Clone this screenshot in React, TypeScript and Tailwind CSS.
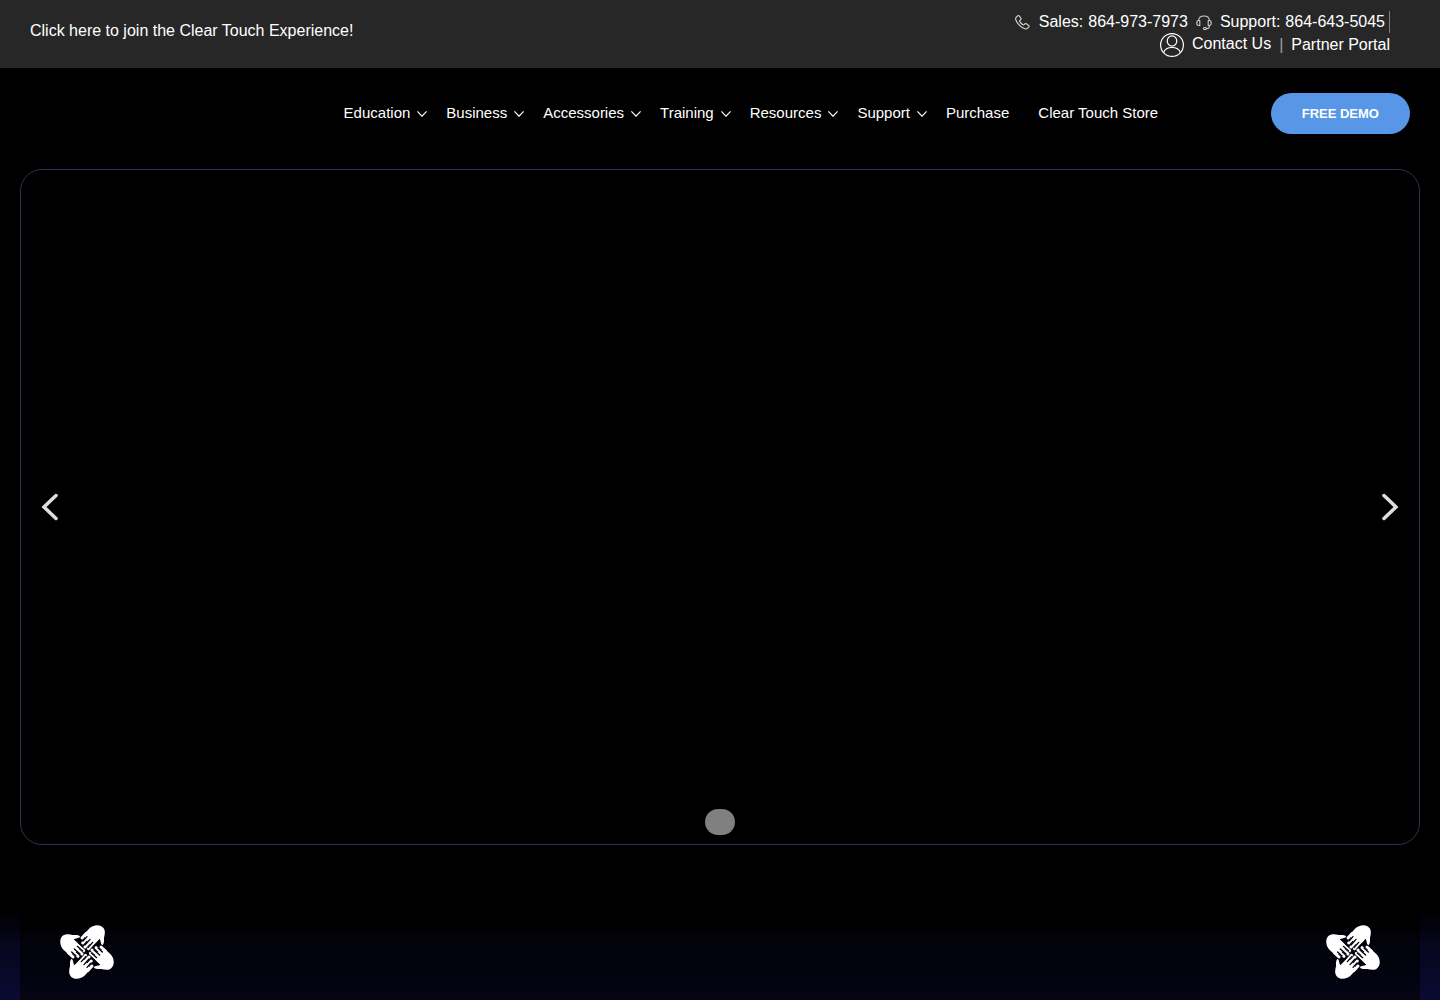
import React from "react";

const NAV = [
  { label: "Education", menu: true },
  { label: "Business", menu: true },
  { label: "Accessories", menu: true },
  { label: "Training", menu: true },
  { label: "Resources", menu: true },
  { label: "Support", menu: true },
  { label: "Purchase", menu: false },
  { label: "Clear Touch Store", menu: false },
];

function PhoneIcon() {
  return (
    <svg className="size-4" viewBox="0 0 16 16" fill="none" stroke="#dcdcdc" strokeWidth="1.1" strokeLinejoin="round" aria-hidden="true">
      <path d="M1.3 3.100 2.700 1.800c.5-.4 1.100-.4 1.500.1l1.700 2.400c.3.500.3 1-.1 1.400l-.9.8c-.3.3-.3.700-.1 1.100.8 1.300 1.900 2.400 3.200 3.200.4.200.8.200 1.100-.1l.8-.9c.4-.4.9-.4 1.400-.1l2.400 1.700c.5.400.5 1 .1 1.500l-1.300 1.400c-.8.8-2 .8-3.200.3C5.700 13.100 2.600 10 1 6.300.5 5.100.5 3.900 1.300 3.100Z" />
    </svg>
  );
}

function HeadsetIcon() {
  return (
    <svg className="size-4" viewBox="0 0 16 16" fill="none" stroke="#cfcfcf" strokeWidth="1.1" strokeLinejoin="round" aria-hidden="true">
      <path d="M2.500 6.700C2.700 3.700 5 2 8 2s5.300 1.700 5.500 4.700M3.800 6.500v5H2.600C1.300 11.500.8 10.400.8 9S1.300 6.500 2.600 6.500ZM12.200 6.500v5h1.200c1.300 0 1.800-1.100 1.800-2.500S14.700 6.500 13.400 6.500ZM13.200 11.500v1.300c0 1-.6 1.700-1.700 1.700h-1.300" />
      <rect x="7.500" y="13.500" width="3" height="2" rx="1" />
    </svg>
  );
}

function UserIcon() {
  return (
    <svg className="size-6" viewBox="0 0 24 24" fill="none" stroke="#fff" strokeWidth="1.200" aria-hidden="true">
      <circle cx="12" cy="12" r="11.400" />
      <ellipse cx="12" cy="8" rx="4.800" ry="5.100" />
      <path d="M3.600 19.500C4.800 16.300 8 14.500 12 14.500s7.200 1.800 8.400 5" />
    </svg>
  );
}

function ChevronDown() {
  return (
    <svg className="h-[7px] w-[11px]" viewBox="0 0 11 7" fill="none" stroke="#fff" strokeWidth="1.200" aria-hidden="true">
      <path d="M1.400 1.300 6 6.200 10.600 1.300" />
    </svg>
  );
}

function Hands() {
  return (
    <svg className="size-[54px]" viewBox="-81 -81 162 162" role="img" aria-label="Four joined hands">
      {[0, 90, 180, 270].map((angle) => (
        <g key={angle} transform={`rotate(${angle})`}>
          <path
            fill="#fff"
            d="M-10-52 6-70C18-82 41-85 50-71 56-62 53-52 51-43 51-33 52-25 46-20 40-25 42-34 38-40 32-33 25-26 18-20L4-28Z"
          />
          <path
            fill="none"
            stroke="#fff"
            strokeWidth="9"
            strokeLinecap="round"
            d="M-2-56-15-42M8-50-13-27M15-39-6-15M22-31 4-10"
          />
          <path fill="none" stroke="#020209" strokeWidth="4" strokeLinecap="round" d="M0-46-12-33M9-38-6-21M17-29 3-13" />
        </g>
      ))}
    </svg>
  );
}

function Arrow({ next }: { next?: boolean }) {
  return (
    <button type="button" aria-label={next ? "Next slide" : "Previous slide"} className="p-2">
      <svg className="h-7 w-[18px]" viewBox="0 0 18 28" fill="none" stroke="#dedede" strokeWidth="3.500" strokeLinecap="round" aria-hidden="true">
        <path d={next ? "M3 2.500 15 14 3 25.500" : "M15 2.500 3 14 15 25.500"} />
      </svg>
    </button>
  );
}

export default function App() {
  return (
    <div className="flex min-h-screen flex-col bg-black font-['Liberation_Sans',Arial,sans-serif] text-white">
      <div className="flex items-start justify-between bg-[#272727] pt-[11px] pr-[50px] pb-[11px] pl-[30px] text-base leading-[22px]">
        <a href="#experience" className="pt-[9px]">Click here to join the Clear Touch Experience!</a>
        <div className="flex flex-col items-end">
          <div className="flex items-center border-r border-[#808080] pr-1">
            <PhoneIcon />
            <span className="ml-2 leading-5">Sales:</span>
            <a href="tel:8649737973" className="ml-[5px] mr-2 leading-5">864-973-7973</a>
            <HeadsetIcon />
            <span className="ml-2 leading-5">Support:</span>
            <a href="tel:8646435045" className="ml-[5px] leading-[22px]">864-643-5045</a>
          </div>
          <div className="flex items-center">
            <a href="#contact" className="flex items-center gap-2">
              <UserIcon />
              <span className="pb-0.5 leading-5">Contact Us</span>
            </a>
            <span className="mx-2 text-[#a0a0a0]">|</span>
            <a href="#partner">Partner Portal</a>
          </div>
        </div>
      </div>

      <header className="flex items-center pt-[25px] pr-[30px] pb-[35px] pl-[30px]">
        <div className="w-[201px]" />
        <nav className="flex flex-1 items-center justify-center text-[15px] leading-5">
          {NAV.map((item, i) => (
            <a
              key={item.label}
              href="#menu"
              className={`flex items-center gap-1.5 ${i === NAV.length - 1 ? "" : item.menu ? "mr-[19px]" : "mr-[29px]"}`}
            >
              <span className="pb-0.5">{item.label}</span>
              {item.menu && <ChevronDown />}
            </a>
          ))}
        </nav>
        <a href="#demo" className="rounded-full bg-[#5897e8] px-[31px] py-[11px] text-[13px] leading-[19px] font-bold">
          FREE DEMO
        </a>
      </header>

      <section aria-label="Highlights" className="relative mx-5 flex min-h-[676px] items-center justify-between rounded-[22px] border border-[#302e4c] px-3">
        <Arrow />
        <Arrow next />
        <button type="button" aria-label="Slide 1" className="absolute bottom-[9px] left-1/2 h-[26px] w-[30px] -translate-x-1/2 rounded-[13px] bg-[#808080]" />
      </section>

      <section className="mt-10 flex flex-1 bg-linear-to-b from-black via-[#06061c] to-[#0a0a34] px-5">
        <div className="flex flex-1 items-start justify-between bg-linear-to-b from-black via-[#02020a] to-[#040414] px-10 pt-10">
          <Hands />
          <Hands />
        </div>
      </section>
    </div>
  );
}
